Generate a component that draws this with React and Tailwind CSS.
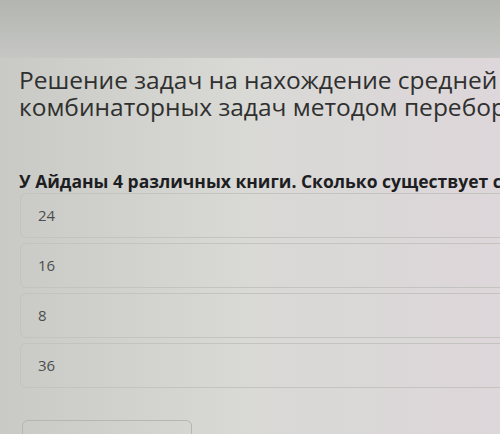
import React from "react";

const options = ["24", "16", "8", "36"];

export default function App() {
  return (
    <div
      className="relative w-[500px] h-[434px] overflow-hidden bg-gradient-to-r from-[#c9cac6] via-[#d9d9d6] to-[#ddd6da]"
      style={{ fontFamily: '"Open Sans", "Noto Sans", sans-serif' }}
    >
      {/* top band of the photographed screen */}
      <div className="h-[58px] bg-gradient-to-b from-[#b3b5b1] to-[#c6c7c4]" />

      <div className="pl-[19px] w-[900px]">
        <h1 className="text-[24.5px] leading-[27px] text-[#2f302f] font-normal whitespace-nowrap mt-[8px]">
          Решение задач на нахождение средней арифметической.
          <br />
          комбинаторных задач методом перебора
        </h1>

        <p className="mt-[51px] text-[17.5px] leading-[20px] font-bold text-[#1d1e22] whitespace-nowrap">
          У Айданы 4 различных книги. Сколько существует способов?
        </p>

        <div className="mt-[2px] ml-[1px] flex flex-col gap-[5px]">
          {options.map((o) => (
            <div
              key={o}
              className="h-[45px] rounded-md border border-[#c3c3c0] flex items-center pl-[17px] text-[15px] text-[#4d4e4d]"
            >
              {o}
            </div>
          ))}
        </div>

        <div className="mt-[32px] ml-[3px] w-[170px] h-[40px] rounded-md border border-[#b6b6b3]" />
      </div>
    </div>
  );
}
